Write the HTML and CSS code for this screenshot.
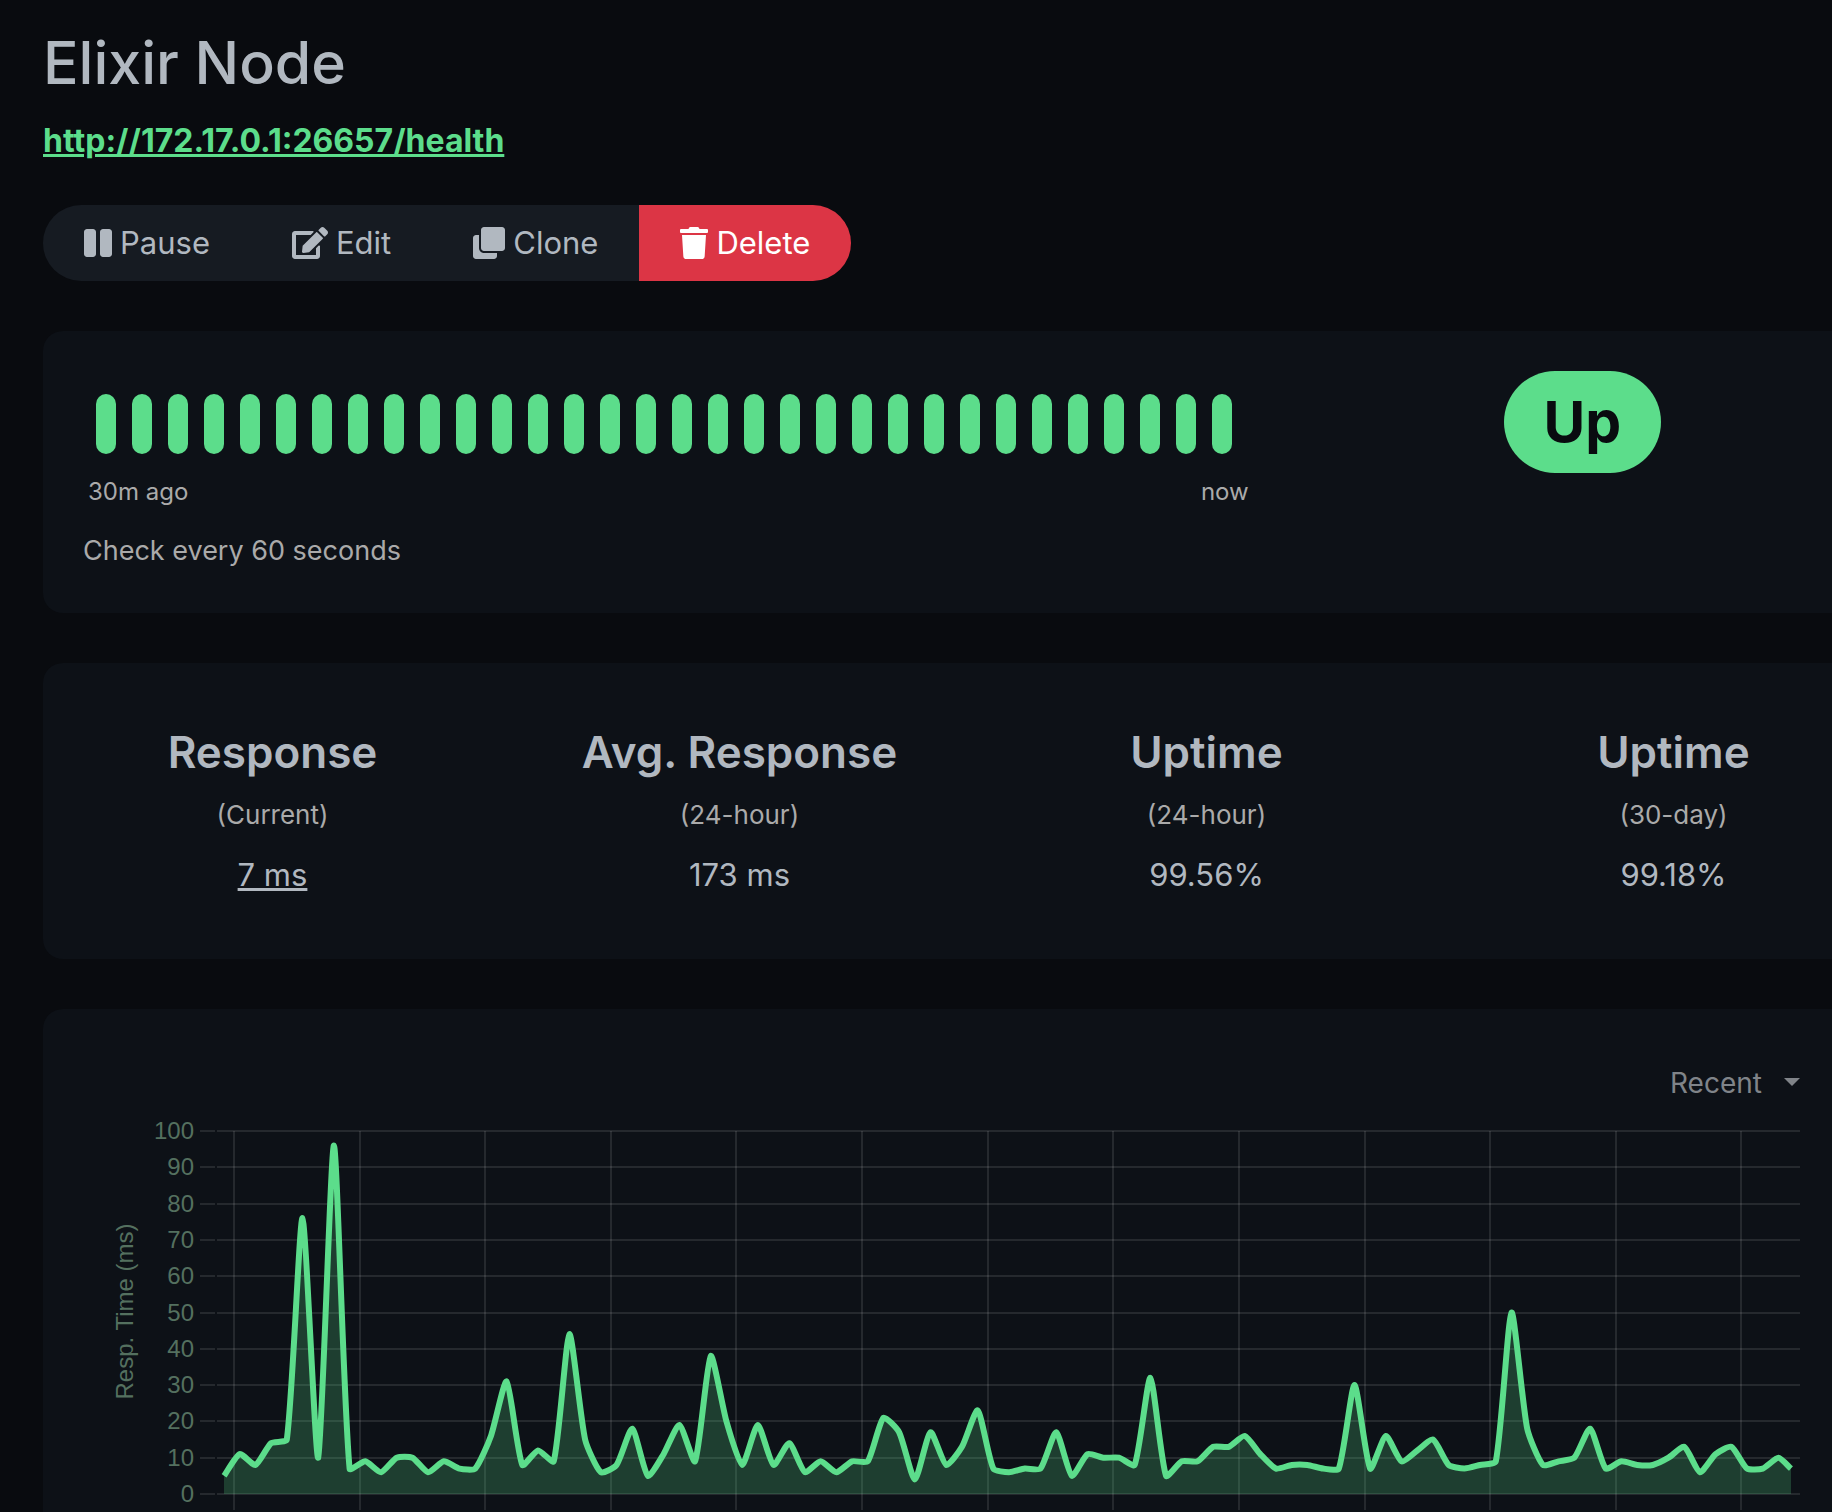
FILE: index.html
```
<!DOCTYPE html>
<html lang="en">
<head>
<meta charset="utf-8">
<meta name="viewport" content="width=device-width, initial-scale=1">
<title>Elixir Node</title>
<link rel="stylesheet" href="styles.css">
</head>
<body>
<main class="page">
  <h1 class="title">Elixir Node</h1>
  <p class="url"><a class="url-link" href="http://172.17.0.1:26657/health">http://172.17.0.1:26657/health</a></p>

  <div class="actions">
    <button class="btn" type="button"><svg class="icon" width="28" height="32" viewBox="0 0 448 512" aria-hidden="true"><path d="M144 479H48c-26.500 0-48-21.500-48-48V79c0-26.500 21.500-48 48-48h96c26.500 0 48 21.500 48 48v352c0 26.500-21.500 48-48 48zm304-48V79c0-26.500-21.500-48-48-48h-96c-26.500 0-48 21.500-48 48v352c0 26.500 21.500 48 48 48h96c26.500 0 48-21.500 48-48z"/></svg>Pause</button>
    <button class="btn" type="button"><svg class="icon" width="36" height="32" viewBox="0 0 576 512" aria-hidden="true"><path d="M402.600 83.200l90.200 90.200c3.800 3.800 3.800 10 0 13.800L274.400 405.600l-92.800 10.300c-12.400 1.400-22.900-9.100-21.500-21.500l10.300-92.800L388.800 83.200c3.800-3.800 10-3.800 13.800 0zm162-22.900l-48.800-48.800c-15.200-15.200-39.900-15.200-55.200 0l-35.400 35.400c-3.800 3.800-3.800 10 0 13.800l90.200 90.200c3.800 3.800 10 3.800 13.800 0l35.400-35.400c15.200-15.300 15.200-40 0-55.200zM384 346.200V448H64V128h229.800c3.200 0 6.200-1.300 8.500-3.500l40-40c7.600-7.600 2.200-20.500-8.500-20.500H48C21.500 64 0 85.500 0 112v352c0 26.500 21.500 48 48 48h352c26.500 0 48-21.500 48-48V306.200c0-10.700-12.900-16-20.500-8.500l-40 40c-2.200 2.300-3.500 5.300-3.500 8.500z"/></svg>Edit</button>
    <button class="btn" type="button"><svg class="icon" width="32" height="32" viewBox="0 0 512 512" aria-hidden="true"><path d="M464 0c26.510 0 48 21.490 48 48v288c0 26.510-21.490 48-48 48H176c-26.510 0-48-21.490-48-48V48c0-26.510 21.490-48 48-48h288M176 416c-44.112 0-80-35.888-80-80V128H48c-26.510 0-48 21.490-48 48v288c0 26.510 21.490 48 48 48h288c26.510 0 48-21.490 48-48v-48H176z"/></svg>Clone</button>
    <button class="btn btn-danger" type="button"><svg class="icon" width="28" height="32" viewBox="0 0 448 512" aria-hidden="true"><path d="M432 32H312l-9.400-18.700A24 24 0 0 0 281.100 0H166.800a23.720 23.720 0 0 0-21.400 13.300L136 32H16A16 16 0 0 0 0 48v32a16 16 0 0 0 16 16h416a16 16 0 0 0 16-16V48a16 16 0 0 0-16-16zM53.200 467a48 48 0 0 0 47.900 45h245.800a48 48 0 0 0 47.900-45L416 128H32z"/></svg>Delete</button>
  </div>

  <section class="card status">
    <div class="status-main">
      <div class="beats" id="beats"></div>
      <div class="beat-range"><span>30m ago</span><span>now</span></div>
      <p class="interval">Check every 60 seconds</p>
    </div>
    <div class="status-side"><span class="badge">Up</span></div>
  </section>

  <section class="card stats">
    <div class="stats-row">
      <div class="stat"><h2 class="stat-name">Response</h2><p class="stat-period">(Current)</p><a class="stat-value stat-link" href="#chart">7 ms</a></div>
      <div class="stat"><h2 class="stat-name">Avg. Response</h2><p class="stat-period">(24-hour)</p><span class="stat-value">173 ms</span></div>
      <div class="stat"><h2 class="stat-name">Uptime</h2><p class="stat-period">(24-hour)</p><span class="stat-value">99.56%</span></div>
      <div class="stat"><h2 class="stat-name">Uptime</h2><p class="stat-period">(30-day)</p><span class="stat-value">99.18%</span></div>
    </div>
  </section>

  <section class="card history">
    <div class="period">
      <select class="period-select" aria-label="Chart period"><option>Recent</option><option>3h</option><option>6h</option><option>24h</option><option>1w</option></select>
      <svg class="period-caret" width="16" height="8" viewBox="0 0 16 8" aria-hidden="true"><path d="M0 0h16L8 8z"/></svg>
    </div>
    <svg class="chart" id="chart" role="img" aria-label="Response time chart"></svg>
  </section>
</main>
<script src="chart.js"></script>
</body>
</html>
```
FILE: styles.css
```
* { box-sizing: border-box; }

body {
  margin: 0;
  background: #090b0f;
  color: #b1b8c0;
  font-family: Inter, "Noto Sans", sans-serif;
  font-size: 32px;
  line-height: 48px;
}

h1, h2, p { margin: 0; }

.page {
  height: 100vh;
  overflow: hidden;
  padding: 24px 0 0 43px;
}

.title {
  font-size: 59px;
  line-height: 77px;
  font-weight: 500;
}

.url { margin-top: 16px; }

.url-link {
  color: #5cdd8b;
  font-size: 32px;
  font-weight: 700;
}

.actions {
  display: flex;
  margin-top: 40px;
}

.btn {
  display: flex;
  align-items: center;
  gap: 8px;
  height: 76px;
  padding: 0 41px;
  border: 0;
  background: #161b22;
  color: #b1b8c0;
  font: inherit;
  font-size: 31px;
}

.btn:first-child { border-radius: 38px 0 0 38px; }
.btn:last-child { border-radius: 0 38px 38px 0; }

.btn-danger {
  background: #dc3545;
  color: #fff;
}

.icon { fill: currentColor; }

/* Cards run past the right edge of the window */
.card {
  margin: 50px -71px 0 0;
  padding: 40px;
  border-radius: 20px;
  background: #0d1117;
}

.status {
  display: flex;
  height: 282px;
  padding: 40px 16px;
}

.status-main {
  flex: 0 0 calc(100% * 2 / 3);
  padding: 0 24px;
}

.status-side {
  flex: 1;
  text-align: center;
}

.beats {
  display: flex;
  gap: 16px;
  padding: 23px 13px 0;
}

.beat {
  width: 20px;
  height: 60px;
  border-radius: 10px;
  background: #5cdd8b;
}

.beat-range {
  display: flex;
  justify-content: space-between;
  margin-top: 20px;
  padding: 0 5px;
  color: #aaa;
  font-size: 24px;
  line-height: 36px;
}

.interval {
  margin-top: 20px;
  color: #aaa;
  font-size: 27px;
  line-height: 42px;
}

.badge {
  display: inline-block;
  padding: 0 40px;
  border-radius: 51px;
  background: #5cdd8b;
  color: #090b0f;
  font-size: 57px;
  line-height: 102px;
  font-weight: 700;
}

.stats {
  height: 296px;
  padding: 60px 0;
}

.stats-row {
  display: grid;
  grid-template-columns: repeat(4, 1fr);
  margin: 0 -4px;
}

.stat { text-align: center; }

.stat-name {
  font-size: 44px;
  line-height: 58px;
  font-weight: 600;
}

.stat-period {
  margin-top: 16px;
  color: #aaa;
  font-size: 26px;
  line-height: 36px;
}

.stat-value {
  display: block;
  margin-top: 18px;
  font-size: 31px;
}

.stat-link { color: inherit; }

.history { padding: 50px 103px 0 40px; }

.period {
  position: relative;
  width: 130px;
  margin-left: auto;
}

.period-select {
  display: block;
  width: 100%;
  height: 44px;
  padding: 0 0 5px;
  border: 0;
  appearance: none;
  background: transparent;
  color: #808489;
  font: inherit;
  font-size: 28px;
}

.period-caret {
  position: absolute;
  top: 19px;
  right: 0;
  fill: #808489;
  pointer-events: none;
}

.chart {
  display: block;
  width: 100%;
  height: 440px;
}

.axis-text {
  fill: #54705f;
  font-family: "Liberation Sans", Arial, sans-serif;
  font-size: 24px;
}

.grid {
  stroke: #fff;
  stroke-opacity: 0.1;
  stroke-width: 2;
}

.line {
  fill: none;
  stroke: #5cdd8b;
  stroke-width: 6;
  stroke-linejoin: round;
}

.area {
  fill: #5cdd8b;
  fill-opacity: 0.22;
}
```
FILE: chart.js
```
const beats = document.getElementById('beats');
for (let i = 0; i < 32; i++) {
  const beat = document.createElement('span');
  beat.className = 'beat';
  beats.appendChild(beat);
}

const data = [
  5, 11, 8, 14, 15, 76, 10, 96, 7, 9, 6, 10, 10, 6, 9, 7, 7, 16, 31, 8,
  12, 9, 44, 15, 6, 8, 18, 5, 11, 19, 9, 38, 20, 8, 19, 8, 14, 6, 9, 6,
  9, 9, 21, 17, 4, 17, 8, 13, 23, 7, 6, 7, 7, 17, 5, 11, 10, 10, 8, 32,
  5, 9, 9, 13, 13, 16, 11, 7, 8, 8, 7, 7, 30, 7, 16, 9, 12, 15, 8, 7,
  8, 9, 50, 18, 8, 9, 10, 18, 7, 9, 8, 8, 10, 13, 6, 11, 13, 7, 7, 10, 7
];
// One check a minute; the newest arrived a few seconds early
const minutes = data.map((v, i) => i === data.length - 1 ? i - 0.2 : i);

const svg = document.getElementById('chart');
const NS = 'http://www.w3.org/2000/svg';

function add(name, attrs, text) {
  const el = document.createElementNS(NS, name);
  for (const key in attrs) el.setAttribute(key, attrs[key]);
  if (text !== undefined) el.textContent = text;
  svg.appendChild(el);
}

function draw() {
  const width = svg.clientWidth;
  const top = 28, bottom = 391, left = 134, right = width;
  const tension = 0.2;
  svg.replaceChildren();
  svg.setAttribute('viewBox', `0 0 ${width} 440`);

  for (let v = 0; v <= 100; v += 10) {
    const y = Math.round(bottom - (bottom - top) * v / 100);
    add('path', { class: 'grid', d: `M117 ${y}H132M${left} ${y}H${right}` });
    add('text', { class: 'axis-text', x: 111, y: y + 8, 'text-anchor': 'end' }, v);
  }

  const x0 = 141, x1 = right - 9;
  const perMinute = (x1 - x0) / minutes[minutes.length - 1];
  for (let i = 0; i < 13; i++) {
    const x = Math.round(x0 + 10 + i * 8 * perMinute);
    add('path', { class: 'grid', d: `M${x} ${top}V${bottom + 16}` });
  }
  const mid = (top + bottom) / 2 - 1;
  add('text', { class: 'axis-text', 'text-anchor': 'middle', transform: `translate(50 ${mid}) rotate(-90)` }, 'Resp. Time (ms)');

  const pts = data.map((v, i) => [x0 + perMinute * minutes[i], bottom - (bottom - top) * v / 100]);
  const ctrl = pts.map((p, i) => {
    const a = pts[i - 1] || p, b = pts[i + 1] || p;
    const d0 = Math.hypot(p[0] - a[0], p[1] - a[1]);
    const d1 = Math.hypot(b[0] - p[0], b[1] - p[1]);
    const f0 = tension * d0 / (d0 + d1), f1 = tension * d1 / (d0 + d1);
    const dx = b[0] - a[0], dy = b[1] - a[1];
    return [p[0] - f0 * dx, p[1] - f0 * dy, p[0] + f1 * dx, p[1] + f1 * dy];
  });
  let line = `M${pts[0]}`;
  for (let i = 1; i < pts.length; i++) {
    line += `C${ctrl[i - 1][2]} ${ctrl[i - 1][3]} ${ctrl[i][0]} ${ctrl[i][1]} ${pts[i]}`;
  }
  add('path', { class: 'area', d: `${line}V${bottom}H${x0}Z` });
  add('path', { class: 'line', d: line });
}

draw();
window.addEventListener('resize', draw);
```
